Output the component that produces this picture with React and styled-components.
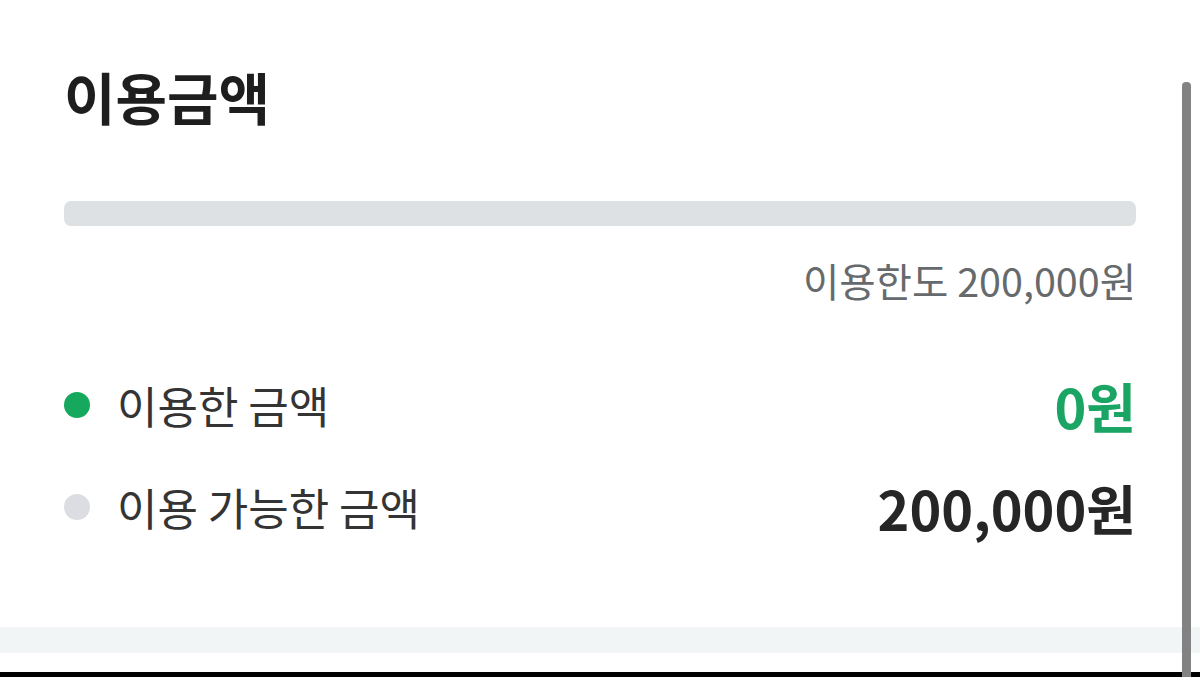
import styled, { createGlobalStyle } from "styled-components"

const GlobalStyle = createGlobalStyle`
  html, body {
    margin: 0;
    padding: 0;
    background: #ffffff;
  }
  body {
    font-family: "Noto Sans CJK KR", "Noto Sans", sans-serif;
    color: #222;
  }
`;

const Screen = styled.div`
  position: relative;
  width: 1200px;
  height: 677px;
  overflow: hidden;
  display: flex;
  flex-direction: column;
  background: #fff;
`;

const Card = styled.section`
  padding: 60px 64px 0 64px;
  height: 567px;
  box-sizing: border-box;
`;

const Title = styled.h2`
  margin: 0;
  font-size: 56px;
  font-weight: 700;
  line-height: 72px;
  color: #1e1e1e;
`;

const Track = styled.div`
  margin-top: 69px;
  height: 25px;
  border-radius: 7px;
  background: #dde1e3;
`;

const Limit = styled.div`
  margin-top: 30px;
  text-align: right;
  font-size: 39.5px;
  line-height: 48px;
  color: #666a6d;
`;

const List = styled.div`
  margin-top: 76px;
  display: flex;
  flex-direction: column;
  gap: 52px;
`;

const Row = styled.div`
  display: flex;
  align-items: center;
  height: 50px;
`;

const Dot = styled.span`
  width: 26px;
  height: 26px;
  border-radius: 50%;
  margin-right: 27px;
  background: ${(p) => p.$color};
  flex: none;
`;

const Label = styled.span`
  flex: 1;
  font-size: 44px;
  color: #343434;
`;

const Amount = styled.span`
  font-size: 54px;
  font-weight: 700;
  color: ${(p) => p.$color};
`;

const Strip = styled.div`
  margin-top: 60px;
  height: 26px;
  background: #f2f5f6;
`;

const Spacer = styled.div`
  flex: 1;
`;

const BottomBar = styled.div`
  height: 5px;
  background: #000;
`;

const Scrollbar = styled.div`
  position: absolute;
  top: 82px;
  right: 9px;
  width: 9px;
  height: 600px;
  border-radius: 4px 4px 0 0;
  background: #828282;
`;

const rows = [
  { label: "이용한 금액", amount: "0원", dot: "#16a85c", color: "#1aa564" },
  { label: "이용 가능한 금액", amount: "200,000원", dot: "#dcdde2", color: "#262626" },
];

export default function App() {
  return (
    <>
      <GlobalStyle />
      <Screen>
        <Card>
          <Title>이용금액</Title>
          <Track />
          <Limit>이용한도 200,000원</Limit>
          <List>
            {rows.map((r) => (
              <Row key={r.label}>
                <Dot $color={r.dot} />
                <Label>{r.label}</Label>
                <Amount $color={r.color}>{r.amount}</Amount>
              </Row>
            ))}
          </List>
        </Card>
        <Strip />
        <Spacer />
        <BottomBar />
        <Scrollbar />
      </Screen>
    </>
  );
}
